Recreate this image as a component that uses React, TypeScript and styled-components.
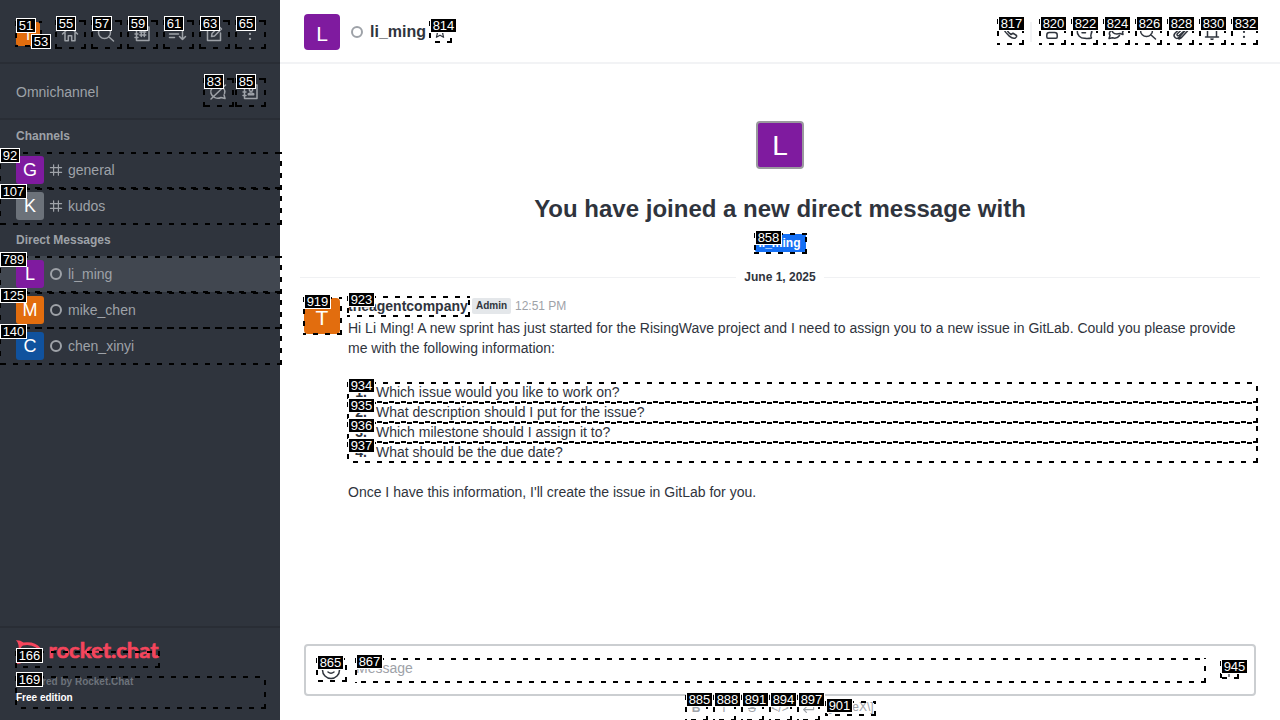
import React from 'react';
import styled, { createGlobalStyle } from 'styled-components';

const GlobalStyle = createGlobalStyle`
  * { box-sizing: border-box; }
  body { margin: 0; overflow: hidden; font-family: "Liberation Sans", Arial, sans-serif; font-size: 14px; color: #2f343d; }
`;

const Page = styled.div`
  position: relative;
  display: flex;
  width: 1280px;
  height: 720px;
  overflow: hidden;
  background: #fff;
`;

/* ---------- sidebar ---------- */
const Sidebar = styled.aside`
  display: flex;
  flex-direction: column;
  width: 280px;
  height: 720px;
  background: #2f343d;
  color: #9ea2a8;
`;
const SidebarBar = styled.div<{ $h: number }>`
  display: flex;
  align-items: center;
  gap: 8px;
  height: ${(p) => p.$h}px;
  padding: 6px 16px 0;
  border-bottom: 2px solid #292d35;
`;
const OmniBar = styled(SidebarBar)`
  gap: 4px;
  padding-top: 2px;
`;
const BarTitle = styled.span`
  flex: 1;
  line-height: 20px;
`;
const IconCell = styled.span<{ $w?: number }>`
  display: flex;
  align-items: center;
  justify-content: center;
  flex: none;
  width: ${(p) => p.$w ?? 28}px;
  height: 28px;
`;
const UserCell = styled.div`
  width: 32px;
  height: 24px;
`;
const Avatar = styled.span<{ $size: number; $bg: string; $ring?: boolean }>`
  display: flex;
  align-items: center;
  justify-content: center;
  flex: none;
  width: ${(p) => p.$size}px;
  height: ${(p) => p.$size}px;
  padding-top: ${(p) => (p.$size > 30 ? 2 : 0)}px;
  border: ${(p) => (p.$ring ? '2px solid #9a9a9e' : '0')};
  border-radius: ${(p) => (p.$size > 30 ? 4 : 3)}px;
  background: ${(p) => p.$bg};
  color: #fff;
  font-size: ${(p) => Math.round(p.$size * (p.$size > 30 ? 0.58 : 0.63))}px;
  line-height: 1;
`;
const GroupTitle = styled.div`
  height: 32px;
  padding: 0 16px;
  font-size: 12px;
  font-weight: 700;
  line-height: 32px;
`;
const Room = styled.div<{ $active?: boolean }>`
  display: flex;
  align-items: center;
  gap: 4px;
  height: 36px;
  padding: 0 16px;
  background: ${(p) => (p.$active ? '#414750' : 'transparent')};
`;
const RoomIcon = styled.span`
  display: flex;
  align-items: center;
  justify-content: center;
  width: 16px;
  height: 16px;
`;
const Status = styled.span`
  display: block;
  width: 12px;
  height: 12px;
  border: 2px solid #9ea2a8;
  border-radius: 50%;
`;
const SidebarFooter = styled.footer`
  display: flex;
  flex-direction: column;
  height: 94px;
  margin-top: auto;
  padding: 12px 16px 0;
  border-top: 2px solid #292d35;
  font-size: 10px;
  font-weight: 700;
  line-height: 16px;
`;
const Powered = styled.span`
  margin-top: 9px;
  color: #6c727a;
`;
const Edition = styled.span`
  color: #fff;
`;
const LogoMark = styled.svg`
  display: block;
  flex: none;
  overflow: visible;
`;

/* ---------- main column ---------- */
const Main = styled.main`
  display: flex;
  flex-direction: column;
  flex: 1;
  min-width: 0;
`;
const RoomHeader = styled.header`
  display: flex;
  align-items: center;
  height: 64px;
  padding: 2px 22px 0 24px;
  border-bottom: 2px solid #f2f3f5;
`;
const HeaderStatus = styled(Status)`
  margin: 0 7px 0 11px;
`;
const RoomName = styled.h1`
  flex: none;
  width: 58px;
  margin: 0;
  font-size: 16px;
  line-height: 24px;
`;
const HeaderActions = styled.div`
  display: flex;
  align-items: center;
  gap: 4px;
  margin-left: auto;
`;
const HeaderDivider = styled.span`
  width: 2px;
  height: 20px;
  margin: 0 2px 0 1px;
  background: #f2f3f5;
`;
const Feed = styled.section`
  display: flex;
  flex-direction: column;
  height: 580px;
  padding-top: 57px;
`;
const Intro = styled.div`
  display: flex;
  flex-direction: column;
  align-items: center;
`;
const IntroTitle = styled.h2`
  margin: 24px 0 9px;
  font-size: 24px;
  line-height: 32px;
`;
const UserTag = styled.span`
  width: 51px;
  height: 18px;
  padding-right: 5px;
  border-radius: 2px;
  background: #1570f5;
  color: #fff;
  font-size: 12px;
  font-weight: 700;
  line-height: 18px;
  text-align: right;
`;
const DateRow = styled.div`
  display: flex;
  align-items: center;
  gap: 8px;
  margin: 17px 20px 0;
  font-size: 12px;
  font-weight: 700;
  line-height: 16px;
  &::before, &::after { content: ''; flex: 1; height: 1px; background: #f0f1f3; }
`;
const Message = styled.article`
  display: flex;
  gap: 8px;
  padding: 13px 24px 0;
`;
const MessageBody = styled.div`
  width: 908px;
  line-height: 20px;
`;
const MessageHead = styled.div`
  display: flex;
  align-items: center;
  height: 16px;
  margin-bottom: 4px;
`;
const Author = styled.span`
  width: 124px;
  font-weight: 700;
`;
const Role = styled.span`
  width: 39px;
  height: 16px;
  margin-right: 4px;
  border-radius: 2px;
  background: #e4e7ea;
  font-size: 10px;
  font-weight: 700;
  line-height: 16px;
  text-align: center;
`;
const Time = styled.span`
  color: #9ea2a8;
  font-size: 12px;
`;
const Paragraph = styled.p`
  margin: 0;
`;
const Questions = styled.ol`
  margin: 24px 0 20px;
  padding: 0;
  list-style: none;
`;
const Question = styled.li`
  display: flex;
  gap: 9px;
`;
const QuestionNumber = styled.span`
  width: 19px;
  font-weight: 700;
  text-align: right;
`;
const Composer = styled.div`
  display: flex;
  align-items: center;
  flex: none;
  height: 52px;
  margin: 0 24px;
  padding: 0 17px 0 15px;
  border: 2px solid #cbced1;
  border-radius: 4px;
`;
const Placeholder = styled.span`
  flex: 1;
  padding: 0 0 4px 15px;
  color: #9ea2a8;
`;
const Formatting = styled.div`
  display: flex;
  height: 24px;
  padding: 1px 0 0 405px;
  color: #9ea2a8;
  font-size: 12px;
  line-height: 20px;
`;
const FormatCell = styled.span<{ $bold?: boolean; $strike?: boolean }>`
  display: flex;
  align-items: center;
  justify-content: center;
  flex: none;
  width: 28px;
  height: 22px;
  padding-right: 6px;
  font-weight: ${(p) => (p.$bold ? 700 : 400)};
  text-decoration: ${(p) => (p.$strike ? 'line-through' : 'none')};
`;

/* ---------- element markers ---------- */
const dash = (dir: string) => `repeating-linear-gradient(${dir}, #000 0 5px, transparent 5px 12px)`;
const Outline = styled.span<{ $x: number; $y: number; $w: number; $h: number }>`
  position: absolute;
  left: ${(p) => p.$x}px;
  top: ${(p) => p.$y}px;
  width: ${(p) => p.$w}px;
  height: ${(p) => p.$h}px;
  background:
    ${dash('to right')} 0 0 / 100% 2px no-repeat,
    ${dash('to left')} 0 100% / 100% 2px no-repeat,
    ${dash('to bottom')} 0 0 / 2px 100% no-repeat,
    ${dash('to top')} 100% 0 / 2px 100% no-repeat;
`;
const Tag = styled.span<{ $x: number; $y: number; $w: number }>`
  position: absolute;
  left: ${(p) => p.$x}px;
  top: ${(p) => p.$y}px;
  width: ${(p) => p.$w}px;
  height: 15px;
  border: 1px solid #fff;
  background: #000;
  color: #fff;
  font-size: 13px;
  line-height: 13px;
  text-align: center;
  white-space: nowrap;
`;

type Mark = { id: number; tag: [number, number]; box?: [number, number, number, number] };
const marks: Mark[] = [
  { id: 51, tag: [16, 18], box: [15, 21, 27, 26] },
  { id: 53, tag: [31, 34] },
  ...[55, 57, 59, 61, 63, 65].map((id, i): Mark => ({ id, tag: [56 + i * 36, 16], box: [55 + i * 36, 20, 31, 29] })),
  { id: 83, tag: [204, 74], box: [203, 78, 31, 29] },
  { id: 85, tag: [236, 74], box: [235, 78, 31, 29] },
  { id: 92, tag: [0, 148], box: [-1, 152, 283, 38] },
  { id: 107, tag: [0, 184], box: [-1, 187, 283, 38] },
  { id: 789, tag: [0, 252], box: [-1, 256, 283, 38] },
  { id: 125, tag: [0, 288], box: [-1, 291, 283, 38] },
  { id: 140, tag: [0, 324], box: [-1, 327, 283, 38] },
  { id: 166, tag: [16, 648], box: [15, 651, 145, 17] },
  { id: 169, tag: [16, 672], box: [15, 676, 251, 33] },
  { id: 814, tag: [430, 18], box: [429, 21, 23, 22] },
  { id: 817, tag: [998, 16], box: [997, 19, 27, 26] },
  ...[820, 822, 824, 826, 828, 830, 832].map((id, i): Mark => ({ id, tag: [1040 + i * 32, 16], box: [1039 + i * 32, 19, 27, 26] })),
  { id: 858, tag: [755, 230], box: [754, 233, 53, 21] },
  { id: 919, tag: [304, 294], box: [303, 297, 39, 38] },
  { id: 923, tag: [348, 292], box: [347, 296, 123, 21] },
  ...[934, 935, 936, 937].map((id, i): Mark => ({ id, tag: [348, 378 + i * 20], box: [347, 382 + i * 20, 911, 21] })),
  { id: 865, tag: [317, 655], box: [316, 658, 31, 24] },
  { id: 867, tag: [356, 654], box: [355, 658, 851, 25] },
  { id: 945, tag: [1221, 659], box: [1220, 661, 19, 18] },
  ...[885, 888, 891, 894, 897].map((id, i): Mark => ({ id, tag: [686 + i * 28, 692], box: [685 + i * 28, 695, 23, 26] })),
  { id: 901, tag: [826, 698], box: [825, 701, 51, 15] },
];

/* ---------- icons ---------- */
const paths = {
  home: 'M2.5 10 10 3l7.5 7M5 8.5v8.3h3.3v-5h3.4v5H15V8.5',
  search: 'M14.5 8.5a6 6 0 1 1-12 0a6 6 0 0 1 12 0M12.5 12.5l5 4.5',
  directory: 'M4.5 3h12.5v13.5H4.5zM3 6h3M3 10h3M3 13.5h3M9.3 6.5v6M12.3 6.5v6M7.8 8h6M7.8 11h6',
  sort: 'M1.5 6h9M1.5 10h9M1.5 13.5h5M14.5 4v11.5M11.5 12.5l3 3l3-3',
  edit: 'M11 3.5H3.5v13h13V9M7.5 12.5l.5-3l7-7l2.5 2.5l-7 7z',
  kebab: 'M10 4.8v.2M10 9.8v.2M10 14.8v.2',
  bubbleOff: 'M16.5 11.5a7 6.5 0 1 0-3.5 4l4 1l-1-3.5M3 17L17.5 3',
  contacts: 'M4.5 3h12.5v13.5H4.5zM3 6h3M3 10h3M3 13.5h3M12.7 7.8a1.7 1.7 0 1 1-3.4 0a1.7 1.7 0 0 1 3.4 0M8.3 12.8v-1q2.7-1.7 5.4 0v1z',
  star: 'M10 3l2.1 4.7l5 .5l-3.8 3.4l1.2 5L10 14l-4.5 2.6l1.2-5L2.9 8.2l5-.5z',
  phone: 'M3 3.5L6 2.8l1.8 3.7L6 8.2q1.5 3 4 4.3l2-1.3l3.5 2.3q.5 1.7-1.2 2.6q-2.5 1-6-2Q3.500 10 2.300 6z',
  person: 'M12.8 5.5a2.8 2.8 0 1 1-5.600 0a2.800 2.800 0 0 1 5.600 0M4.800 13q0-2.500 2.500-2.500h5.400q2.500 0 2.500 2.500v2q0 1.200-1.200 1.200H6q-1.200 0-1.200-1.200z',
  thread: 'M17 12.500A7.300 7 0 1 0 11 16.300q3 .5 6.500-.3q-1.200-1.500-.5-3.500M7.500 7.500h5M8 10.700h3.500',
  discussion: 'M7 10.500q-3-4 1.500-6.500q5-2 8 1.500q1.800 3 0 4.500l.5 2.500l-3-1Q9 12.700 7 10.500M4.500 9Q2.500 11 4 13.500L3 16.500l3.500-.7q4.500 1.400 7-2.300',
  clip: 'M15.500 8L9.500 15q-2.500 2.500-4.500.5t0-4.200L12 4.500q2-1.500 3.500 0t0 3.200L9 13.500q-1 .7-1.700 0t0-1.700L13 6.500M17.500 9L11.500 15.500L9 17',
  bell: 'M3.500 15h13M5.500 15V8.500q0-5 4.500-5t4.500 5V15M9 17q1 .6 2 0',
  smile: 'M18.500 10a8.500 8.500 0 1 1-17 0a8.500 8.500 0 0 1 17 0M7 7.500v.2M13 7.500v.2M7 12q3 2.500 6 0',
  hash: 'M7 3.500v13M13 3.500v13M3 7h14M3 13h14',
  plus: 'M10 2v16M2 10h16',
  enter: 'M17 5v7H4.500M8 8.500L4.500 12L8 15.500',
};
type IconName = keyof typeof paths;

function Icon({ name, size = 20 }: { name: IconName; size?: number }) {
  return (
    <svg width={size} height={size} viewBox="0 0 20 20" fill="none" stroke="currentColor" strokeWidth={name === 'kebab' ? 2.2 : 1.5} strokeLinecap="round" strokeLinejoin="round">
      <path d={paths[name]} />
    </svg>
  );
}

function Logo() {
  return (
    <LogoMark width="150" height="25" viewBox="0 0 150 25" fill="#f5455c">
      <path d="M0 .3Q4 0 7.500 2.500Q19 1 24.500 8Q29 16 20 20.500Q14 23.500 7 22Q4 24.500 0 24Q3 20.500 2.300 17.500Q.5 15 1.200 11Q3.500 7.800 2.500 5Q2 2 0 .3zM7 5.500Q4 7 3.800 12Q4 17.500 8 19Q14 20.500 20 17Q25 12 20 7.500Q14 3.800 7 5.500z" fillRule="evenodd" />
      <text x="32.500" y="18" textLength="110" lengthAdjust="spacingAndGlyphs" fontFamily="Lato, sans-serif" fontWeight="700" fontSize="21" stroke="#f5455c" strokeWidth="0.6">rocket.chat</text>
    </LogoMark>
  );
}

const purple = '#7f1b9f';
const sideIcons: IconName[] = ['home', 'search', 'directory', 'sort', 'edit', 'kebab'];
const headIcons: IconName[] = ['person', 'thread', 'discussion', 'search', 'clip', 'bell', 'kebab'];
const channels = [
  { name: 'general', bg: purple },
  { name: 'kudos', bg: '#6c727a' },
];
const directs = [
  { name: 'li_ming', bg: purple },
  { name: 'mike_chen', bg: '#e26d0e' },
  { name: 'chen_xinyi', bg: '#10529e' },
];
const questions = [
  'Which issue would you like to work on?',
  'What description should I put for the issue?',
  'Which milestone should I assign it to?',
  'What should be the due date?',
];

export default function App() {
  return (
    <Page>
      <GlobalStyle />
      <Sidebar>
        <SidebarBar $h={64}>
          <UserCell><Avatar $size={24} $bg="#e26d0e">T</Avatar></UserCell>
          {sideIcons.map((n) => <IconCell key={n}><Icon name={n} /></IconCell>)}
        </SidebarBar>
        <OmniBar $h={56}>
          <BarTitle>Omnichannel</BarTitle>
          <IconCell><Icon name="bubbleOff" /></IconCell>
          <IconCell><Icon name="contacts" /></IconCell>
        </OmniBar>
        <GroupTitle>Channels</GroupTitle>
        {channels.map((c) => (
          <Room key={c.name}>
            <Avatar $size={28} $bg={c.bg}>{c.name[0].toUpperCase()}</Avatar>
            <RoomIcon><Icon name="hash" size={16} /></RoomIcon>
            {c.name}
          </Room>
        ))}
        <GroupTitle>Direct Messages</GroupTitle>
        {directs.map((d, i) => (
          <Room key={d.name} $active={i === 0}>
            <Avatar $size={28} $bg={d.bg}>{d.name[0].toUpperCase()}</Avatar>
            <RoomIcon><Status /></RoomIcon>
            {d.name}
          </Room>
        ))}
        <SidebarFooter>
          <Logo />
          <Powered>Powered by Rocket.Chat</Powered>
          <Edition>Free edition</Edition>
        </SidebarFooter>
      </Sidebar>

      <Main>
        <RoomHeader>
          <Avatar $size={36} $bg={purple}>L</Avatar>
          <HeaderStatus />
          <RoomName>li_ming</RoomName>
          <IconCell $w={24}><Icon name="star" size={16} /></IconCell>
          <HeaderActions>
            <IconCell><Icon name="phone" /></IconCell>
            <HeaderDivider />
            {headIcons.map((n) => <IconCell key={n}><Icon name={n} /></IconCell>)}
          </HeaderActions>
        </RoomHeader>
        <Feed>
          <Intro>
            <Avatar $size={48} $bg={purple} $ring>L</Avatar>
            <IntroTitle>You have joined a new direct message with</IntroTitle>
            <UserTag>li_ming</UserTag>
          </Intro>
          <DateRow>June 1, 2025</DateRow>
          <Message>
            <Avatar $size={36} $bg="#e26d0e">T</Avatar>
            <MessageBody>
              <MessageHead>
                <Author>theagentcompany</Author>
                <Role>Admin</Role>
                <Time>12:51 PM</Time>
              </MessageHead>
              <Paragraph>
                Hi Li Ming! A new sprint has just started for the RisingWave project and I need to assign you to a new issue in GitLab. Could you please provide me with the following information:
              </Paragraph>
              <Questions>
                {questions.map((q, i) => (
                  <Question key={q}><QuestionNumber>{i + 1}.</QuestionNumber>{q}</Question>
                ))}
              </Questions>
              <Paragraph>Once I have this information, I'll create the issue in GitLab for you.</Paragraph>
            </MessageBody>
          </Message>
        </Feed>
        <Composer>
          <Icon name="smile" />
          <Placeholder>Message</Placeholder>
          <Icon name="plus" size={16} />
        </Composer>
        <Formatting>
          <FormatCell $bold>B</FormatCell>
          <FormatCell>I</FormatCell>
          <FormatCell $strike>S</FormatCell>
          <FormatCell>&lt;/&gt;</FormatCell>
          <FormatCell><Icon name="enter" size={16} /></FormatCell>
          <span>\[KaTeX\]</span>
        </Formatting>
      </Main>

      {marks.map((m) => m.box && <Outline key={m.id} $x={m.box[0]} $y={m.box[1]} $w={m.box[2]} $h={m.box[3]} />)}
      {marks.map((m) => <Tag key={m.id} $x={m.tag[0]} $y={m.tag[1]} $w={m.id < 100 ? 20 : 27}>{m.id}</Tag>)}
    </Page>
  );
}
